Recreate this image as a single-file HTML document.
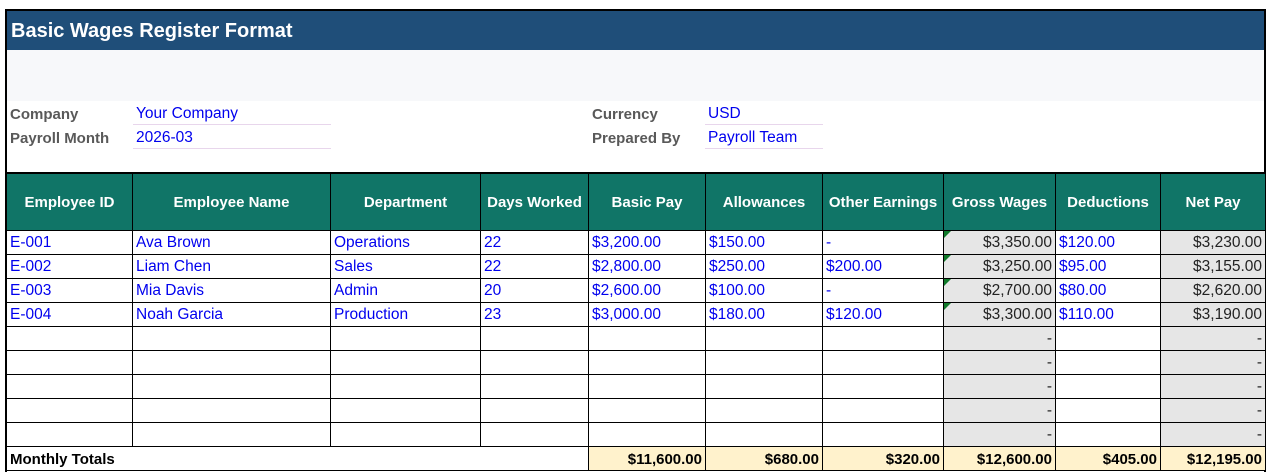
<!DOCTYPE html>
<html><head><meta charset="utf-8"><style>
*{margin:0;padding:0;box-sizing:border-box}
body{width:1270px;height:475px;background:#fff;font-family:"Liberation Sans",sans-serif;position:relative;overflow:hidden}
.frame{position:absolute;left:5px;top:9px;width:1261px;height:463px;border:2px solid #000;border-bottom:none}
.title{position:absolute;left:7px;top:11px;width:1257px;height:39px;background:#1F4E79;color:#fff;font-weight:bold;font-size:20px;line-height:40px;padding-left:4px}
.band{position:absolute;left:7px;top:50px;width:1257px;height:51px;background:#F7F8FA}
.lbl{position:absolute;color:#595959;font-weight:bold;font-size:15px}
.val{position:absolute;color:#0000EE;font-size:15.5px;border-bottom:1px solid #E8D6EC;height:24px;line-height:26px;padding-left:3px}
table{position:absolute;left:6px;top:172px;border-collapse:collapse;table-layout:fixed;font-size:15.5px}
td,th{border:1px solid #000;height:24px;padding:2px 3px 0;white-space:nowrap;overflow:hidden}
th{background:#107567;color:#fff;height:57px;font-size:15px;border-top:2px solid #000}
td{color:#0000EE}
.g{background:#E6E6E6;color:#222;text-align:right;position:relative}
.tri:before{content:"";position:absolute;left:0;top:0;border-top:7px solid #107a2a;border-right:7px solid transparent}
tr.tot td{background:#FFF2CC;color:#000;font-weight:bold;text-align:right;font-size:15px}
tr.tot td.w{background:#fff;text-align:left}
</style></head><body>
<div class="frame"></div>
<div class="title">Basic Wages Register Format</div>
<div class="band"></div>
<div class="lbl" style="left:10px;top:106px">Company</div>
<div class="lbl" style="left:10px;top:130px">Payroll Month</div>
<div class="val" style="left:133px;top:101px;width:198px">Your Company</div>
<div class="val" style="left:133px;top:125px;width:198px">2026-03</div>
<div class="lbl" style="left:592px;top:106px">Currency</div>
<div class="lbl" style="left:592px;top:130px">Prepared By</div>
<div class="val" style="left:705px;top:101px;width:118px">USD</div>
<div class="val" style="left:705px;top:125px;width:118px">Payroll Team</div>
<table>
<colgroup><col style="width:126px"><col style="width:198px"><col style="width:150px"><col style="width:108px"><col style="width:117px"><col style="width:117px"><col style="width:121px"><col style="width:112px"><col style="width:105px"><col style="width:105px"></colgroup>
<tr><th>Employee ID</th><th>Employee Name</th><th>Department</th><th>Days Worked</th><th>Basic Pay</th><th>Allowances</th><th>Other Earnings</th><th>Gross Wages</th><th>Deductions</th><th>Net Pay</th></tr>
<tr><td>E-001</td><td>Ava Brown</td><td>Operations</td><td>22</td><td>$3,200.00</td><td>$150.00</td><td>-</td><td class="g tri">$3,350.00</td><td>$120.00</td><td class="g">$3,230.00</td></tr>
<tr><td>E-002</td><td>Liam Chen</td><td>Sales</td><td>22</td><td>$2,800.00</td><td>$250.00</td><td>$200.00</td><td class="g tri">$3,250.00</td><td>$95.00</td><td class="g">$3,155.00</td></tr>
<tr><td>E-003</td><td>Mia Davis</td><td>Admin</td><td>20</td><td>$2,600.00</td><td>$100.00</td><td>-</td><td class="g tri">$2,700.00</td><td>$80.00</td><td class="g">$2,620.00</td></tr>
<tr><td>E-004</td><td>Noah Garcia</td><td>Production</td><td>23</td><td>$3,000.00</td><td>$180.00</td><td>$120.00</td><td class="g tri">$3,300.00</td><td>$110.00</td><td class="g">$3,190.00</td></tr>
<tr><td></td><td></td><td></td><td></td><td></td><td></td><td></td><td class="g">-</td><td></td><td class="g">-</td></tr>
<tr><td></td><td></td><td></td><td></td><td></td><td></td><td></td><td class="g">-</td><td></td><td class="g">-</td></tr>
<tr><td></td><td></td><td></td><td></td><td></td><td></td><td></td><td class="g">-</td><td></td><td class="g">-</td></tr>
<tr><td></td><td></td><td></td><td></td><td></td><td></td><td></td><td class="g">-</td><td></td><td class="g">-</td></tr>
<tr><td></td><td></td><td></td><td></td><td></td><td></td><td></td><td class="g">-</td><td></td><td class="g">-</td></tr>
<tr class="tot"><td class="w" colspan="4" style="border-right:none">Monthly Totals</td><td>$11,600.00</td><td>$680.00</td><td>$320.00</td><td>$12,600.00</td><td>$405.00</td><td>$12,195.00</td></tr>
</table>
</body></html>
